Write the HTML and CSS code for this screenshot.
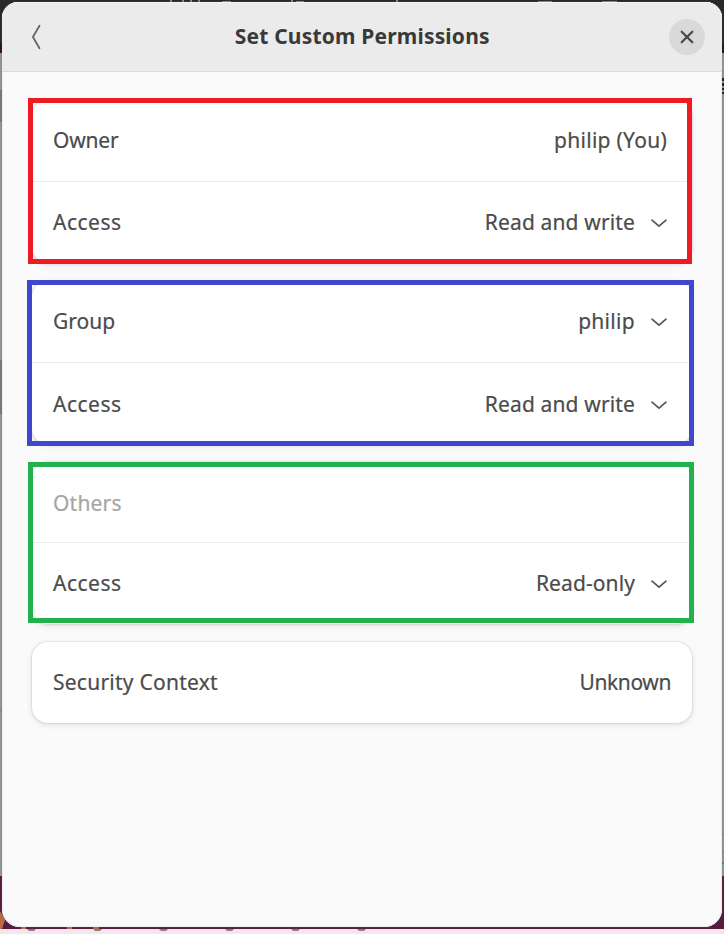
FILE: index.html
```html
<!DOCTYPE html>
<html lang="en">
<head>
<meta charset="utf-8">
<title>Set Custom Permissions</title>
<link rel="stylesheet" href="styles.css">
</head>
<body>
<svg class="backdrop" viewBox="0 0 724 934" aria-hidden="true">
  <path fill="#292929" d="M0 0h724v53H0z"/>
  <path fill="#310b28" d="M0 43h724v10H0z"/>
  <path fill="#929292" d="M0 53h724v823H0z"/>
  <path fill="#777" d="M0 90h2v32H0zM0 360h2v54H0zM722 834h2v1h-2zM722 852h2v1h-2zM722 862h2v2h-2zM0 710h2v1H0z"/>
  <path fill="#222" d="M722 78h2v3h-2zM722 83h2v3h-2zM722 88h2v2h-2zM722 92h2v2h-2z"/>
  <path fill="#571d3e" d="M0 876h724v53H0z"/>
  <path fill="#b96b48" d="M0 911l5 9-3 9H0zM21 927h5v2h-5zM67 927h5v2h-5zM93 927h6v2h-6z"/>
  <path fill="#f5e6ed" d="M0 929h724v5H0z"/>
  <path fill="#858083" d="M27 929h9l-2 2h-5zM93 929h9l-2 2h-5zM159 929h9l-2 2h-5zM225 929h9l-2 2h-5zM291 929h9l-2 2h-5zM357 929h9l-2 2h-5z"/>
  <path fill="#888" d="M170 0h2v2h-2zM182 0h2v2h-2zM190 0h2v2h-2zM198 0h2v2h-2zM222 1h9v1h-9zM291 0h2v2h-2zM296 1h8v1h-8zM396 0h2v2h-2zM538 1h14v1h-14zM602 1h15v1h-15z"/>
</svg>
<main class="dialog">
  <header class="header">
    <button class="back" aria-label="Back"><svg width="12" height="26" viewBox="0 0 12 26"><path d="M9.5 1.7 2.9 13l6.6 11.3"/></svg></button>
    <h1 class="title">Set Custom Permissions</h1>
    <button class="close" aria-label="Close"><svg width="14" height="14" viewBox="0 0 14 14"><path d="m1.7 1.7 10.6 10.6m0-10.6L1.7 12.3"/></svg></button>
  </header>
  <div class="groups">
    <section class="card framed red">
      <div class="row"><span class="owner">Owner</span><span class="you">philip (You)</span></div>
      <div class="row"><span class="access">Access</span><span class="value"><span class="rw">Read and write</span><svg class="chevron" viewBox="0 0 16 9"><path d="m1 1.2 7 6 7-6"/></svg></span></div>
    </section>
    <section class="card framed blue">
      <div class="row"><span class="group">Group</span><span class="value"><span class="philip">philip</span><svg class="chevron" viewBox="0 0 16 9"><path d="m1 1.2 7 6 7-6"/></svg></span></div>
      <div class="row"><span class="access">Access</span><span class="value"><span class="rw">Read and write</span><svg class="chevron" viewBox="0 0 16 9"><path d="m1 1.2 7 6 7-6"/></svg></span></div>
    </section>
    <section class="card framed green">
      <div class="row"><span class="others">Others</span></div>
      <div class="row"><span class="access">Access</span><span class="value"><span class="ro">Read-only</span><svg class="chevron" viewBox="0 0 16 9"><path d="m1 1.2 7 6 7-6"/></svg></span></div>
    </section>
    <section class="card">
      <div class="row single"><span class="security">Security Context</span><span class="unknown">Unknown</span></div>
    </section>
  </div>
</main>
</body>
</html>
```
FILE: styles.css
```css
* { box-sizing: border-box; }
body {
  margin: 0;
  width: 724px;
  height: 934px;
  overflow: hidden;
  padding: 2px 2px 7px;
  font-family: "Noto Sans", sans-serif;
  font-size: 21px;
  color: #4b4b4b;
}
.backdrop { position: absolute; inset: 0; width: 724px; height: 934px; z-index: -1; }
.dialog {
  width: 720px;
  height: 925px;
  background: #fafafa;
  border-radius: 16px 16px 18px 18px;
  box-shadow: inset 0 0 0 1px #eee, 0 0 1px #777;
  overflow: hidden;
}
.header {
  height: 70px;
  display: flex;
  align-items: center;
  justify-content: space-between;
  padding: 0 16.5px 0 28px;
  background: #ebebeb;
  border-bottom: 1px solid #dadada;
  box-shadow: inset 0 1px #f5f5f5;
}
button { border: 0; padding: 0; background: none; display: grid; place-items: center; }
svg path { stroke-linecap: round; }
.back { width: 12px; height: 36px; }
.close { width: 36px; height: 36px; border-radius: 50%; background: #d9d9d9; }
.back path, .close path, .chevron path { fill: none; stroke: #484848; }
.back path { stroke-width: 1.8; stroke: #666; }
.close path { stroke-width: 2.2; }
.title { margin: 0 0 2px 13px; font-size: 21px; line-height: 36px; letter-spacing: .18px; color: #393939; white-space: nowrap; }
.groups { display: flex; flex-direction: column; gap: 18px; padding: 28px 30px; }
.card {
  position: relative;
  height: 163px;
  background: #fff;
  border-radius: 16px;
  box-shadow: 0 0 0 1px #0000000a, 0 1px 3px 1px #00000012, 0 2px 6px 2px #0000000a;
}
.card:last-child { height: 81px; }
.green { height: 162px; }
.framed::after { content: ""; position: absolute; border: 5px solid #ed1c24; inset: -2px 0 -1px -4px; }
.blue::after { border-color: #3f48cc; inset: -1px -2px -2px -5px; }
.green::after { border-color: #22b14c; inset: 0 -2px 1px -4px; }
.row {
  height: 81px;
  display: flex;
  align-items: center;
  justify-content: space-between;
  padding: 0 25px 2px 21px;
  line-height: 28px;
  white-space: nowrap;
  -webkit-text-stroke: .2px currentColor;
}
.row + .row { border-top: 1px solid #ebebeb; height: 82px; }
.blue .row + .row { padding-bottom: 0; }
.green .row:first-child { height: 80px; padding: 2px 25px 0 21px; }
.green .row + .row { height: 81px; padding-bottom: 0; }
.single { padding-right: 21px; }
.value { display: flex; align-items: center; gap: 16px; }
.chevron { width: 16px; height: 9px; margin-top: 3px; }
.chevron path { stroke-width: 1.7; stroke: #555; }
.others { color: #a5a5a5; letter-spacing: .2px; }
.owner { letter-spacing: -.2px; }
.you { letter-spacing: .27px; }
.access { letter-spacing: .5px; }
.rw { letter-spacing: .14px; }
.philip { letter-spacing: .3px; }
.ro { letter-spacing: .1px; }
.security { letter-spacing: .25px; }
.unknown { letter-spacing: -.4px; }
```
